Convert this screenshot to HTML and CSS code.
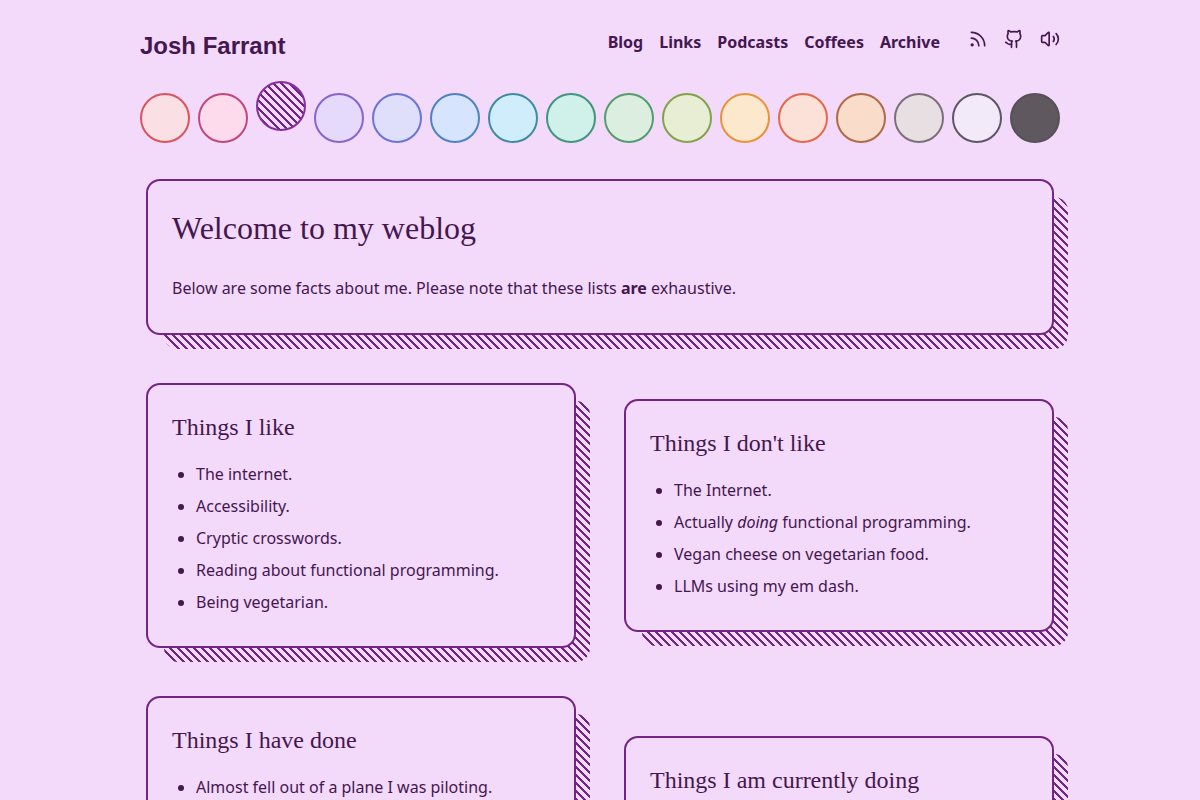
FILE: index.html
```html
<!DOCTYPE html>
<html lang="en">

<head>
  <meta charset="UTF-8" />
  <meta name="viewport" content="width=device-width, initial-scale=1.0">
  <title>Josh Farrant</title>
  <link rel="stylesheet" href="styles.css">
</head>

<body>
  <div class="page">
    <header class="header">
      <a class="site-title" href="/">Josh Farrant</a>
      <nav class="nav">
        <ul class="nav-links">
          <li><a href="/blog">Blog</a></li>
          <li><a href="/links">Links</a></li>
          <li><a href="/podcasts">Podcasts</a></li>
          <li><a href="/coffees">Coffees</a></li>
          <li><a href="/archive">Archive</a></li>
        </ul>
        <div class="nav-icons">
          <a href="/rss.xml" aria-label="RSS feed">
            <svg class="icon" viewBox="0 0 24 24">
              <path d="M4 11a9 9 0 0 1 9 9" />
              <path d="M4 4a16 16 0 0 1 16 16" />
              <circle cx="5" cy="19" r="1" />
            </svg>
          </a>
          <a href="https://github.com" aria-label="GitHub">
            <svg class="icon" viewBox="0 0 24 24">
              <path d="M15 22v-4a4.8 4.8 0 0 0-1-3.5c3 0 6-2 6-5.5.08-1.25-.27-2.48-1-3.5.28-1.15.28-2.35 0-3.5 0 0-1 0-3 1.5-2.64-.5-5.36-.5-8 0C6 2 5 2 5 2c-.3 1.15-.3 2.35 0 3.5A5.403 5.403 0 0 0 4 9c0 3.5 3 5.5 6 5.5-.39.49-.68 1.05-.85 1.65-.17.6-.22 1.23-.15 1.85v4" />
              <path d="M9 18c-4.51 2-5-2-7-2" />
            </svg>
          </a>
          <button type="button" aria-label="Toggle sound">
            <svg class="icon" viewBox="0 0 24 24">
              <path d="M11 4.702a.705.705 0 0 0-1.203-.498L6.413 7.587A1.4 1.4 0 0 1 5.416 8H3a1 1 0 0 0-1 1v6a1 1 0 0 0 1 1h2.416a1.4 1.4 0 0 1 .997.413l3.383 3.384A.705.705 0 0 0 11 19.298z" />
              <path d="M16 9a5 5 0 0 1 0 6" />
              <path d="M19.364 18.364a9 9 0 0 0 0-12.728" />
            </svg>
          </button>
        </div>
      </nav>
    </header>

    <div class="themes" role="group" aria-label="Theme">
      <button type="button" class="theme red" aria-label="Red"></button>
      <button type="button" class="theme pink" aria-label="Pink"></button>
      <button type="button" class="theme purple active" aria-label="Purple" aria-pressed="true"></button>
      <button type="button" class="theme violet" aria-label="Violet"></button>
      <button type="button" class="theme indigo" aria-label="Indigo"></button>
      <button type="button" class="theme blue" aria-label="Blue"></button>
      <button type="button" class="theme cyan" aria-label="Cyan"></button>
      <button type="button" class="theme teal" aria-label="Teal"></button>
      <button type="button" class="theme green" aria-label="Green"></button>
      <button type="button" class="theme lime" aria-label="Lime"></button>
      <button type="button" class="theme yellow" aria-label="Yellow"></button>
      <button type="button" class="theme orange" aria-label="Orange"></button>
      <button type="button" class="theme brown" aria-label="Brown"></button>
      <button type="button" class="theme stone" aria-label="Stone"></button>
      <button type="button" class="theme light" aria-label="Light"></button>
      <button type="button" class="theme dark" aria-label="Dark"></button>
    </div>

    <main class="cards">
      <section class="card wide">
        <h1>Welcome to my weblog</h1>
        <p>Below are some facts about me. Please note that these lists <strong>are</strong> exhaustive.</p>
      </section>

      <section class="card">
        <h2>Things I like</h2>
        <ul>
          <li>The internet.</li>
          <li>Accessibility.</li>
          <li>Cryptic crosswords.</li>
          <li>Reading about functional programming.</li>
          <li>Being vegetarian.</li>
        </ul>
      </section>

      <section class="card">
        <h2>Things I don't like</h2>
        <ul>
          <li>The Internet.</li>
          <li>Actually <em>doing</em> functional programming.</li>
          <li>Vegan cheese on vegetarian food.</li>
          <li>LLMs using my em dash.</li>
        </ul>
      </section>

      <section class="card">
        <h2>Things I have done</h2>
        <ul>
          <li>Almost fell out of a plane I was piloting.</li>
          <li>Made a website with a lot of different colours, and then added a few more of them.</li>
          <li>Recorded several podcasts, some of which were even listened to by other people.</li>
          <li>Drank plenty of coffee.</li>
        </ul>
      </section>

      <section class="card">
        <h2>Things I am currently doing</h2>
        <ul>
          <li>Writing this list.</li>
          <li>Solving a crossword.</li>
          <li>Drinking coffee.</li>
        </ul>
      </section>
    </main>
  </div>
</body>

</html>
```
FILE: styles.css
```css
:root {
  --background: #f3d9fa;
  --border: #702682;
  --text: #44174f;
  --stripes: linear-gradient(45deg, transparent 37%, var(--border) 37% 50%, transparent 50% 87%, var(--border) 87%);
}

* {
  margin: 0;
  padding: 0;
  box-sizing: border-box;
}

body {
  background-color: var(--background);
  color: var(--text);
  font-family: "Noto Sans", sans-serif;
  font-size: 16px;
  line-height: 24px;
}

a {
  color: inherit;
  text-decoration: none;
}

button {
  border: none;
  background: none;
  color: inherit;
  cursor: pointer;
}

.page {
  max-width: 968px;
  margin: 0 auto;
  padding: 29px 24px 48px;
}

.header {
  display: flex;
  justify-content: space-between;
}

.site-title {
  font-family: "Liberation Sans", Arial, sans-serif;
  font-size: 24px;
  line-height: 34px;
  font-weight: bold;
}

.nav {
  display: flex;
  gap: 28px;
}

.nav-links {
  display: flex;
  gap: 16px;
  list-style: none;
  font-weight: bold;
  line-height: 26px;
}

.nav-icons {
  display: flex;
  gap: 16px;
}

.nav-icons a,
.nav-icons button {
  height: 20px;
}

.icon {
  display: block;
  width: 20px;
  height: 20px;
  fill: none;
  stroke: currentColor;
  stroke-width: 2;
  stroke-linecap: round;
  stroke-linejoin: round;
}

/* Theme picker */
.themes {
  display: flex;
  flex-wrap: wrap;
  justify-content: space-between;
  gap: 8px;
  margin: 30px 0 36px;
}

.theme {
  width: 50px;
  height: 50px;
  border: 2px solid;
  border-radius: 50%;
}

.theme.active {
  transform: translateY(-12px);
}

.red { background-color: #fae0e4; border-color: #d9545e; }
.pink { background-color: #fddaec; border-color: #c0487c; }
.purple { background: var(--stripes) 0 0 / 8px 8px; border-color: #862e9c; }
.violet { background-color: #e6dafc; border-color: #8565cc; }
.indigo { background-color: #dfdffc; border-color: #6a74d4; }
.blue { background-color: #d7e4fd; border-color: #4f82c0; }
.cyan { background-color: #d0edfb; border-color: #3f8ba0; }
.teal { background-color: #d0f0ea; border-color: #41957f; }
.green { background-color: #dbeee0; border-color: #559c6c; }
.lime { background-color: #e8eed3; border-color: #82a34a; }
.yellow { background-color: #fce9cd; border-color: #e8923c; }
.orange { background-color: #fbe1d8; border-color: #e3694c; }
.brown { background-color: #f9dcca; border-color: #b06a48; }
.stone { background-color: #e7dfe2; border-color: #7c7078; }
.light { background-color: #f2eaf8; border-color: #5e5566; }
.dark { background-color: #60585f; border-color: #585058; }

/* Cards */
.cards {
  display: grid;
  grid-template-columns: 1fr 1fr;
  align-items: center;
  gap: 48px;
  padding: 0 6px;
}

.card {
  position: relative;
  padding: 24px;
  border: 2px solid var(--border);
  border-radius: 14px;
  background-color: var(--background);
}

/* Striped shadow behind the card */
.card::after {
  content: "";
  position: absolute;
  z-index: -1;
  inset: 16px -16px -16px 16px;
  border-radius: 14px;
  background: var(--stripes) 0 0 / 8px 8px;
}

.wide {
  grid-column: 1 / -1;
}

h1,
h2 {
  font-family: "Liberation Serif", serif;
  font-weight: normal;
}

h1 {
  margin-bottom: 25px;
  font-size: 32px;
  line-height: 46px;
}

h2 {
  margin-bottom: 13px;
  font-size: 24px;
  line-height: 36px;
}

p {
  margin-bottom: 9px;
}

.card ul {
  margin-bottom: 4px;
  padding-left: 24px;
}

.card li {
  padding: 4px 0;
}

@media (max-width: 700px) {
  .cards {
    grid-template-columns: 1fr;
  }

  .header {
    flex-wrap: wrap;
  }
}
```
